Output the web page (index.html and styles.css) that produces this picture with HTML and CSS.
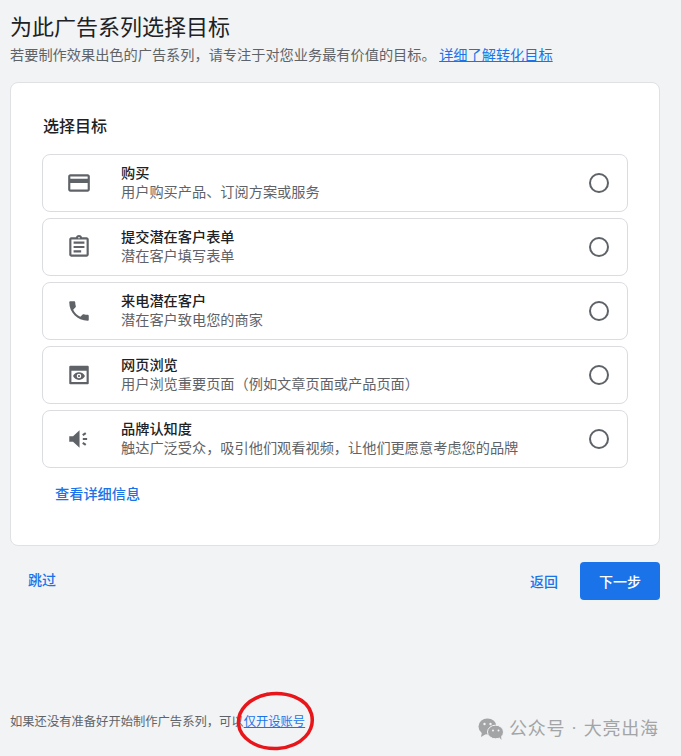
FILE: index.html
```html
<!DOCTYPE html>
<html lang="zh">
<head>
<meta charset="utf-8">
<title>为此广告系列选择目标</title>
<link rel="stylesheet" href="styles.css">
</head>
<body>
<main class="page">
  <h1 class="title">为此广告系列选择目标</h1>
  <p class="subtitle">若要制作效果出色的广告系列，请专注于对您业务最有价值的目标。 <a class="link underline" href="#">详细了解转化目标</a></p>
  <section class="card">
    <h2 class="card-title">选择目标</h2>
    <div class="options">
      <div class="option">
        <svg class="icon" viewBox="0 0 24 24"><path d="M20 4H4c-1.11 0-1.99.89-1.99 2L2 18c0 1.11.89 2 2 2h16c1.11 0 2-.89 2-2V6c0-1.11-.89-2-2-2zm0 14H4v-6h16v6zm0-10H4V6h16v2z"/></svg>
        <div class="option-text"><div class="option-name">购买</div><div class="option-desc">用户购买产品、订阅方案或服务</div></div>
        <span class="radio"></span>
      </div>
      <div class="option">
        <svg class="icon" viewBox="0 0 24 24"><path d="M7 15h7v2H7zm0-4h10v2H7zm0-4h10v2H7zm12-4h-4.18C14.4 1.84 13.3 1 12 1s-2.4.84-2.82 2H5c-.14 0-.27.01-.4.04-.39.08-.74.28-1.01.55-.18.18-.33.4-.43.64-.1.23-.16.49-.16.77v14c0 .27.06.54.16.78s.25.45.43.64c.27.27.62.47 1.01.55.13.02.26.03.4.03h14c1.1 0 2-.9 2-2V5c0-1.1-.9-2-2-2zm-7-.25c.41 0 .75.34.75.75s-.34.75-.75.75-.75-.34-.75-.75.34-.75.75-.75zM19 19H5V5h14v14z"/></svg>
        <div class="option-text"><div class="option-name">提交潜在客户表单</div><div class="option-desc">潜在客户填写表单</div></div>
        <span class="radio"></span>
      </div>
      <div class="option">
        <svg class="icon" viewBox="0 0 24 24"><path d="M6.62 10.79c1.44 2.83 3.76 5.14 6.59 6.59l2.2-2.2c.27-.27.67-.36 1.02-.24 1.12.37 2.33.57 3.57.57.55 0 1 .45 1 1V20c0 .55-.45 1-1 1-9.39 0-17-7.61-17-17 0-.55.45-1 1-1h3.5c.55 0 1 .45 1 1 0 1.25.2 2.45.57 3.57.11.35.03.74-.25 1.02l-2.2 2.2z"/></svg>
        <div class="option-text"><div class="option-name">来电潜在客户</div><div class="option-desc">潜在客户致电您的商家</div></div>
        <span class="radio"></span>
      </div>
      <div class="option">
        <svg class="icon" viewBox="0 0 24 24"><path fill-rule="evenodd" d="M4 3.500h16a1 1 0 0 1 1 1v15a1 1 0 0 1-1 1H4a1 1 0 0 1-1-1v-15a1 1 0 0 1 1-1zM5 8v10.500h14V8H5zm7 1.500c2.500 0 4.600 1.400 5.500 3.500-.9 2.100-3 3.500-5.500 3.500S7.400 15.100 6.500 13c.9-2.100 3-3.500 5.500-3.500zm0 1.400a2.100 2.100 0 1 0 0 4.200 2.100 2.100 0 0 0 0-4.200zm0 1.100a1 1 0 1 1 0 2 1 1 0 0 1 0-2z"/></svg>
        <div class="option-text"><div class="option-name">网页浏览</div><div class="option-desc">用户浏览重要页面（例如文章页面或产品页面）</div></div>
        <span class="radio"></span>
      </div>
      <div class="option">
        <svg class="icon" viewBox="0 0 24 24"><path d="M3 9.500v5h3.500l6 5.500V4L6.500 9.500H3zM15.500 11h4v2h-4zM14.900 7.700l2.800-1.900 1.100 1.600-2.800 1.900zM14.900 16.300l1.100-1.600 2.800 1.900-1.100 1.600z"/></svg>
        <div class="option-text"><div class="option-name">品牌认知度</div><div class="option-desc">触达广泛受众，吸引他们观看视频，让他们更愿意考虑您的品牌</div></div>
        <span class="radio"></span>
      </div>
    </div>
    <a class="link more" href="#">查看详细信息</a>
  </section>
  <div class="actions">
    <a class="link skip" href="#">跳过</a>
    <div class="actions-right">
      <a class="link back" href="#">返回</a>
      <button class="next" type="button">下一步</button>
    </div>
  </div>
  <footer class="foot">如果还没有准备好开始制作广告系列，可以<a class="link underline" href="#">仅开设账号</a></footer>
</main>
<svg class="circle" viewBox="0 0 80 60"><path d="M30 3.500C50 0 71 7 75.500 23c4 16-9 33-34 34.500C20 58.500 4 47 2.500 33 1.500 19 13 7 32 3"/></svg>
<div class="watermark">
  <svg class="wechat" viewBox="0 0 26 22"><ellipse cx="9.500" cy="8.500" rx="9" ry="8"/><path d="M4 14l-1 5 5-3z"/><ellipse cx="17.500" cy="14" rx="8" ry="6.800" stroke="#f1f3f4" stroke-width="1"/><path d="M21 19l2.500 3-.5-4.500z"/><circle class="eye" cx="6.500" cy="6" r="1.200"/><circle class="eye" cx="12.500" cy="6" r="1.200"/><circle class="eye" cx="15" cy="12.500" r="1"/><circle class="eye" cx="20.500" cy="12.500" r="1"/></svg>
  <span>公众号 · 大亮出海</span>
</div>
</body>
</html>
```
FILE: styles.css
```css
* { box-sizing: border-box; }
html, body { margin: 0; height: 100%; }
body {
  position: relative;
  height: 756px;
  overflow: hidden;
  background: #f1f3f4;
  color: #202124;
  font-family: "Roboto", "Noto Sans CJK SC", sans-serif;
}
.page { display: flex; flex-direction: column; padding: 14px 21px 0 10px; height: 100%; }
.title { margin: 0; font-size: 22px; line-height: 28px; font-weight: 400; }
.subtitle { margin: 3px 0 0; font-size: 14.2px; line-height: 20px; color: #5f6368; white-space: nowrap; }
.link { color: #1a73e8; text-decoration: none; }
.underline { text-decoration: underline; }
.card {
  margin-top: 17px;
  height: 464px;
  padding: 32px 31px 0;
  background: #fff;
  border: 1px solid #dfe1e5;
  border-radius: 8px;
}
.card-title { margin: 0 0 15px 1px; font-size: 16px; line-height: 24px; font-weight: 500; height: 24px; }
.options { display: flex; flex-direction: column; gap: 6px; }
.option {
  display: flex;
  align-items: center;
  height: 58px;
  padding: 0 18px 0 23px;
  border: 1px solid #dadce0;
  border-radius: 8px;
}
.icon { width: 26px; height: 26px; fill: #5f6368; flex: none; }
.option-text { flex: 1; margin-left: 29px; font-size: 14.2px; line-height: 19px; }
.option-name { font-weight: 500; color: #202124; }
.option-desc { color: #5f6368; }
.radio { width: 20px; height: 20px; border: 2px solid #5f6368; border-radius: 50%; flex: none; }
.more { display: block; margin: 16px 0 0 13px; font-size: 14.2px; line-height: 20px; font-weight: 500; }
.actions { display: flex; justify-content: space-between; align-items: center; margin-top: 16px; }
.skip { margin-left: 18px; margin-top: -4px; font-size: 14px; font-weight: 500; }
.actions-right { display: flex; align-items: center; gap: 22px; }
.back { font-size: 14px; font-weight: 500; }
.next {
  width: 80px;
  height: 38px;
  border: 0;
  border-radius: 4px;
  background: #1a73e8;
  color: #fff;
  font: 500 14px "Roboto", "Noto Sans CJK SC", sans-serif;
}
.foot { margin-top: 113px; font-size: 12.3px; line-height: 18px; color: #5f6368; white-space: nowrap; }
.circle {
  position: absolute;
  left: 236px;
  top: 691px;
  width: 80px;
  height: 60px;
  fill: none;
  stroke: #e8161a;
  stroke-width: 3.500;
}
.watermark {
  position: absolute;
  left: 478px;
  top: 717px;
  display: flex;
  align-items: center;
  gap: 5px;
  font-size: 18px;
  line-height: 24px;
  letter-spacing: .7px;
  word-spacing: 1.500px;
  color: #a3a4a6;
  white-space: nowrap;
}
.wechat { width: 26px; height: 22px; fill: #a3a4a6; }
.eye { fill: #f1f3f4; }
```
